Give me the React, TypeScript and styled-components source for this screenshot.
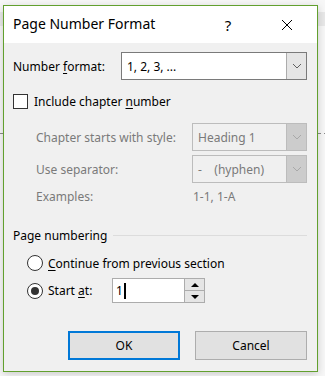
import React from "react";
import styled, { createGlobalStyle } from "styled-components";

const GlobalStyle = createGlobalStyle`
  html, body {
    margin: 0;
    padding: 0;
  }
  body {
    width: 325px;
    height: 376px;
    overflow: hidden;
    font-family: "Noto Sans", "Open Sans", sans-serif;
    background:
      linear-gradient(#e8e8e8, #e8e8e8) 0 12px / 100% 14px no-repeat,
      repeating-linear-gradient(90deg, #8a8a8a 0 3px, transparent 3px 6px) 0 133px / 100% 1px no-repeat,
      #f7f7f7;
  }
`;

const Stage = styled.div`
  padding: 5px 0 0 3px;
`;

const Dialog = styled.div`
  width: 313px;
  height: 365px;
  border: 1px solid #62a02e;
  background: #f0f0f0;
  box-shadow: 0 2px 8px rgba(0, 0, 0, 0.18);
  display: flex;
  flex-direction: column;
  color: #000;
  font-size: 12px;
`;

const TitleBar = styled.div`
  height: 37px;
  background: #fff;
  display: flex;
  align-items: center;
  padding-left: 9px;
`;

const Title = styled.div`
  flex: 1;
  font-size: 14px;
  padding-bottom: 2px;
`;

const TitleButton = styled.div<{ $width: number }>`
  width: ${(p) => p.$width}px;
  height: 37px;
  display: flex;
  align-items: center;
  justify-content: center;
  font-size: 15px;
`;

const Body = styled.div`
  display: flex;
  flex-direction: column;
  padding: 0 10px 0 9px;
`;

const Row = styled.div<{ $top: number; $height: number; $indent?: number }>`
  display: flex;
  align-items: center;
  margin-top: ${(p) => p.$top}px;
  height: ${(p) => p.$height}px;
  padding-left: ${(p) => p.$indent ?? 0}px;
`;

const Label = styled.span<{ $width?: number; $disabled?: boolean }>`
  width: ${(p) => (p.$width ? `${p.$width}px` : "auto")};
  flex-shrink: 0;
  color: ${(p) => (p.$disabled ? "#7a7a7a" : "#000")};
  white-space: nowrap;
`;

const Key = styled.span`
  text-decoration: underline;
  text-underline-offset: 2px;
`;

const Select = styled.div<{ $disabled?: boolean }>`
  flex: 1;
  height: 100%;
  box-sizing: border-box;
  border: 1px solid ${(p) => (p.$disabled ? "#bcbcbc" : "#7a7a7a")};
  background: ${(p) => (p.$disabled ? "#f0f0f0" : "#fff")};
  display: flex;
  align-items: stretch;
  color: ${(p) => (p.$disabled ? "#7a7a7a" : "#000")};
`;

const SelectValue = styled.div`
  flex: 1;
  display: flex;
  align-items: center;
  padding-left: 5px;
  white-space: pre;
`;

const DropButton = styled.div<{ $disabled?: boolean }>`
  width: 19px;
  border-left: 1px solid ${(p) => (p.$disabled ? "#bcbcbc" : "#acacac")};
  background: ${(p) => (p.$disabled ? "#cccccc" : "#e5e5e5")};
  display: flex;
  align-items: center;
  justify-content: center;
`;

const CheckBox = styled.div`
  width: 15px;
  height: 15px;
  box-sizing: border-box;
  border: 1px solid #333;
  background: #fff;
  margin-right: 6px;
`;

const Radio = styled.div<{ $checked?: boolean }>`
  width: 16px;
  height: 16px;
  box-sizing: border-box;
  border-radius: 50%;
  border: 1px solid #333;
  background: #fff;
  margin: 0 5px 0 14px;
  display: flex;
  align-items: center;
  justify-content: center;

  &::after {
    content: "";
    display: ${(p) => (p.$checked ? "block" : "none")};
    width: 8px;
    height: 8px;
    border-radius: 50%;
    background: #333;
  }
`;

const GroupLine = styled.div`
  flex: 1;
  height: 1px;
  background: #dcdcdc;
  margin-left: 6px;
`;

const Spin = styled.div`
  width: 93px;
  height: 100%;
  box-sizing: border-box;
  border: 1px solid #acacac;
  background: #fff;
  display: flex;
  margin-left: 16px;
`;

const SpinValue = styled.div`
  flex: 1;
  display: flex;
  align-items: center;
  padding-left: 3px;
`;

const Caret = styled.span`
  display: inline-block;
  width: 2px;
  height: 16px;
  background: #000;
  margin-left: 1px;
`;

const SpinButtons = styled.div`
  width: 19px;
  display: flex;
  flex-direction: column;
  border-left: 1px solid #acacac;
`;

const SpinButton = styled.div<{ $down?: boolean }>`
  flex: 1;
  background: #e5e5e5;
  border-top: ${(p) => (p.$down ? "1px solid #acacac" : "none")};
  display: flex;
  align-items: center;
  justify-content: center;
`;

const ButtonRow = styled.div`
  display: flex;
  justify-content: flex-end;
  gap: 15px;
  margin-top: 28px;
`;

const Button = styled.div<{ $primary?: boolean }>`
  width: 112px;
  height: 29px;
  box-sizing: border-box;
  border: ${(p) => (p.$primary ? "2px solid #0078d7" : "1px solid #adadad")};
  background: #e1e1e1;
  display: flex;
  align-items: center;
  justify-content: center;
`;

const Chevron = ({ color }: { color: string }) => (
  <svg width="10" height="6" viewBox="0 0 10 6">
    <path d="M1 1 L5 5 L9 1" fill="none" stroke={color} strokeWidth="1" />
  </svg>
);

const Arrow = ({ down }: { down?: boolean }) => (
  <svg width="8" height="4" viewBox="0 0 8 4">
    <path d={down ? "M0 0 H8 L4 4 Z" : "M0 4 H8 L4 0 Z"} fill="#000" />
  </svg>
);

export default function App() {
  return (
    <>
      <GlobalStyle />
      <Stage>
        <Dialog>
          <TitleBar>
            <Title>Page Number Format</Title>
            <TitleButton $width={58}>?</TitleButton>
            <TitleButton $width={60}>
              <svg width="12" height="12" viewBox="0 0 12 12">
                <path d="M1 1 L11 11 M11 1 L1 11" stroke="#000" strokeWidth="1" />
              </svg>
            </TitleButton>
          </TitleBar>
          <Body>
            <Row $top={9} $height={28}>
              <Label $width={108}>
                Number <Key>f</Key>ormat:
              </Label>
              <Select>
                <SelectValue>1, 2, 3, ...</SelectValue>
                <DropButton>
                  <Chevron color="#606060" />
                </DropButton>
              </Select>
            </Row>
            <Row $top={13} $height={16}>
              <CheckBox />
              <Label>
                Include chapter <Key>n</Key>umber
              </Label>
            </Row>
            <Row $top={14} $height={28} $indent={23}>
              <Label $width={156} $disabled>
                Chapter starts with style:
              </Label>
              <Select $disabled>
                <SelectValue>Heading 1</SelectValue>
                <DropButton $disabled>
                  <Chevron color="#a8a8a8" />
                </DropButton>
              </Select>
            </Row>
            <Row $top={4} $height={28} $indent={23}>
              <Label $width={156} $disabled>
                Use separator:
              </Label>
              <Select $disabled>
                <SelectValue>{"-    (hyphen)"}</SelectValue>
                <DropButton $disabled>
                  <Chevron color="#a8a8a8" />
                </DropButton>
              </Select>
            </Row>
            <Row $top={5} $height={16} $indent={23}>
              <Label $width={157} $disabled>
                Examples:
              </Label>
              <Label $disabled>1-1, 1-A</Label>
            </Row>
            <Row $top={23} $height={16}>
              <Label>Page numbering</Label>
              <GroupLine />
            </Row>
            <Row $top={12} $height={16}>
              <Radio />
              <Label>
                <Key>C</Key>ontinue from previous section
              </Label>
            </Row>
            <Row $top={7} $height={25}>
              <Radio $checked />
              <Label $width={48}>
                Start <Key>a</Key>t:
              </Label>
              <Spin>
                <SpinValue>
                  1<Caret />
                </SpinValue>
                <SpinButtons>
                  <SpinButton>
                    <Arrow />
                  </SpinButton>
                  <SpinButton $down>
                    <Arrow down />
                  </SpinButton>
                </SpinButtons>
              </Spin>
            </Row>
            <ButtonRow>
              <Button $primary>OK</Button>
              <Button>Cancel</Button>
            </ButtonRow>
          </Body>
        </Dialog>
      </Stage>
    </>
  );
}
